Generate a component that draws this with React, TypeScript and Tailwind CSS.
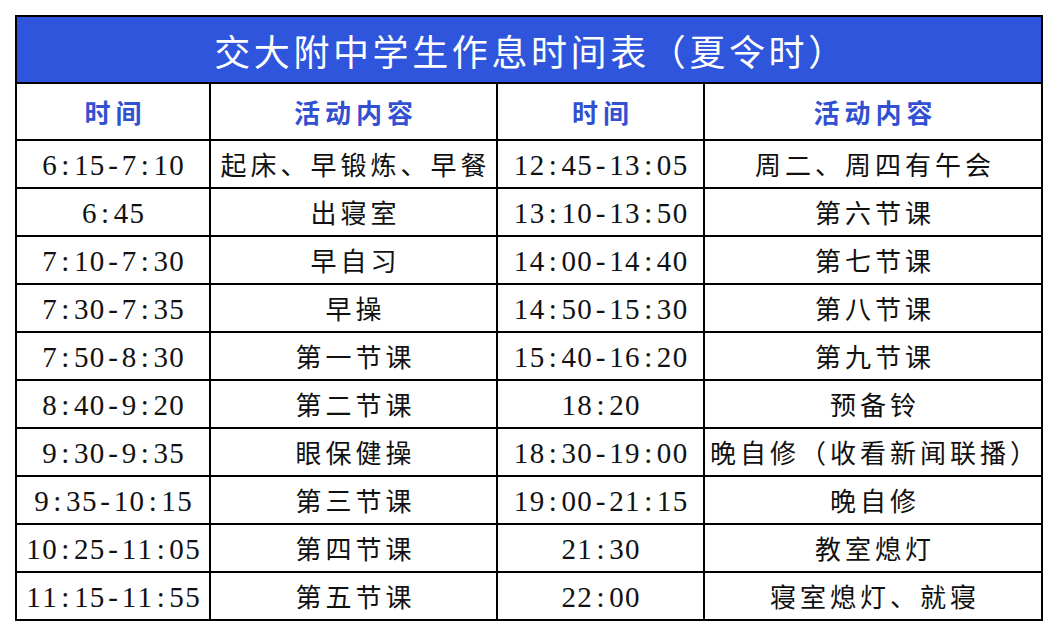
import React from "react";

const rows: [string, string, string, string][] = [
  ["6:15-7:10", "起床、早锻炼、早餐", "12:45-13:05", "周二、周四有午会"],
  ["6:45", "出寝室", "13:10-13:50", "第六节课"],
  ["7:10-7:30", "早自习", "14:00-14:40", "第七节课"],
  ["7:30-7:35", "早操", "14:50-15:30", "第八节课"],
  ["7:50-8:30", "第一节课", "15:40-16:20", "第九节课"],
  ["8:40-9:20", "第二节课", "18:20", "预备铃"],
  ["9:30-9:35", "眼保健操", "18:30-19:00", "晚自修（收看新闻联播）"],
  ["9:35-10:15", "第三节课", "19:00-21:15", "晚自修"],
  ["10:25-11:05", "第四节课", "21:30", "教室熄灯"],
  ["11:15-11:55", "第五节课", "22:00", "寝室熄灯、就寝"],
];

function Time({ t }: { t: string }) {
  return (
    <div className="bg-white flex items-center justify-center pt-[2px] text-[29px] text-[#111] leading-none font-['Liberation_Serif','Noto_Sans_CJK_SC',serif]">
      {t.split("").map((c, i) => (
        <span key={i} className="inline-block w-[15.9px] text-center">
          {c}
        </span>
      ))}
    </div>
  );
}

function Act({ t }: { t: string }) {
  return (
    <div className="bg-white flex items-center justify-center text-[26px] text-[#111] leading-none tracking-[4px] pl-[4px] whitespace-nowrap font-['Noto_Sans_CJK_SC','Noto_Sans',sans-serif]">
      {t}
    </div>
  );
}

function Head({ t }: { t: string }) {
  return (
    <div className="bg-white flex items-center justify-center text-[26px] font-bold text-[#3150d2] leading-none tracking-[5px] pl-[5px] font-['Noto_Sans_CJK_SC','Noto_Sans',sans-serif]">
      {t}
    </div>
  );
}

export default function App() {
  return (
    <div className="w-[1058px] h-[636px] bg-white pl-[15px] pt-[15px]">
      <div className="w-[1028px] grid grid-cols-[192px_285px_205px_336px] grid-rows-[65px_55px_repeat(10,46px)] gap-[2px] bg-black p-[2px]">
        <div className="col-span-4 bg-[#2f55dc] flex items-center justify-center text-white text-[36px] leading-none tracking-[3.6px] pl-[4px] font-['Noto_Sans_CJK_SC','Noto_Sans',sans-serif]">
          交大附中学生作息时间表（夏令时）
        </div>
        <Head t="时间" />
        <Head t="活动内容" />
        <Head t="时间" />
        <Head t="活动内容" />
        {rows.map((r, i) => (
          <React.Fragment key={i}>
            <Time t={r[0]} />
            <Act t={r[1]} />
            <Time t={r[2]} />
            <Act t={r[3]} />
          </React.Fragment>
        ))}
      </div>
    </div>
  );
}
